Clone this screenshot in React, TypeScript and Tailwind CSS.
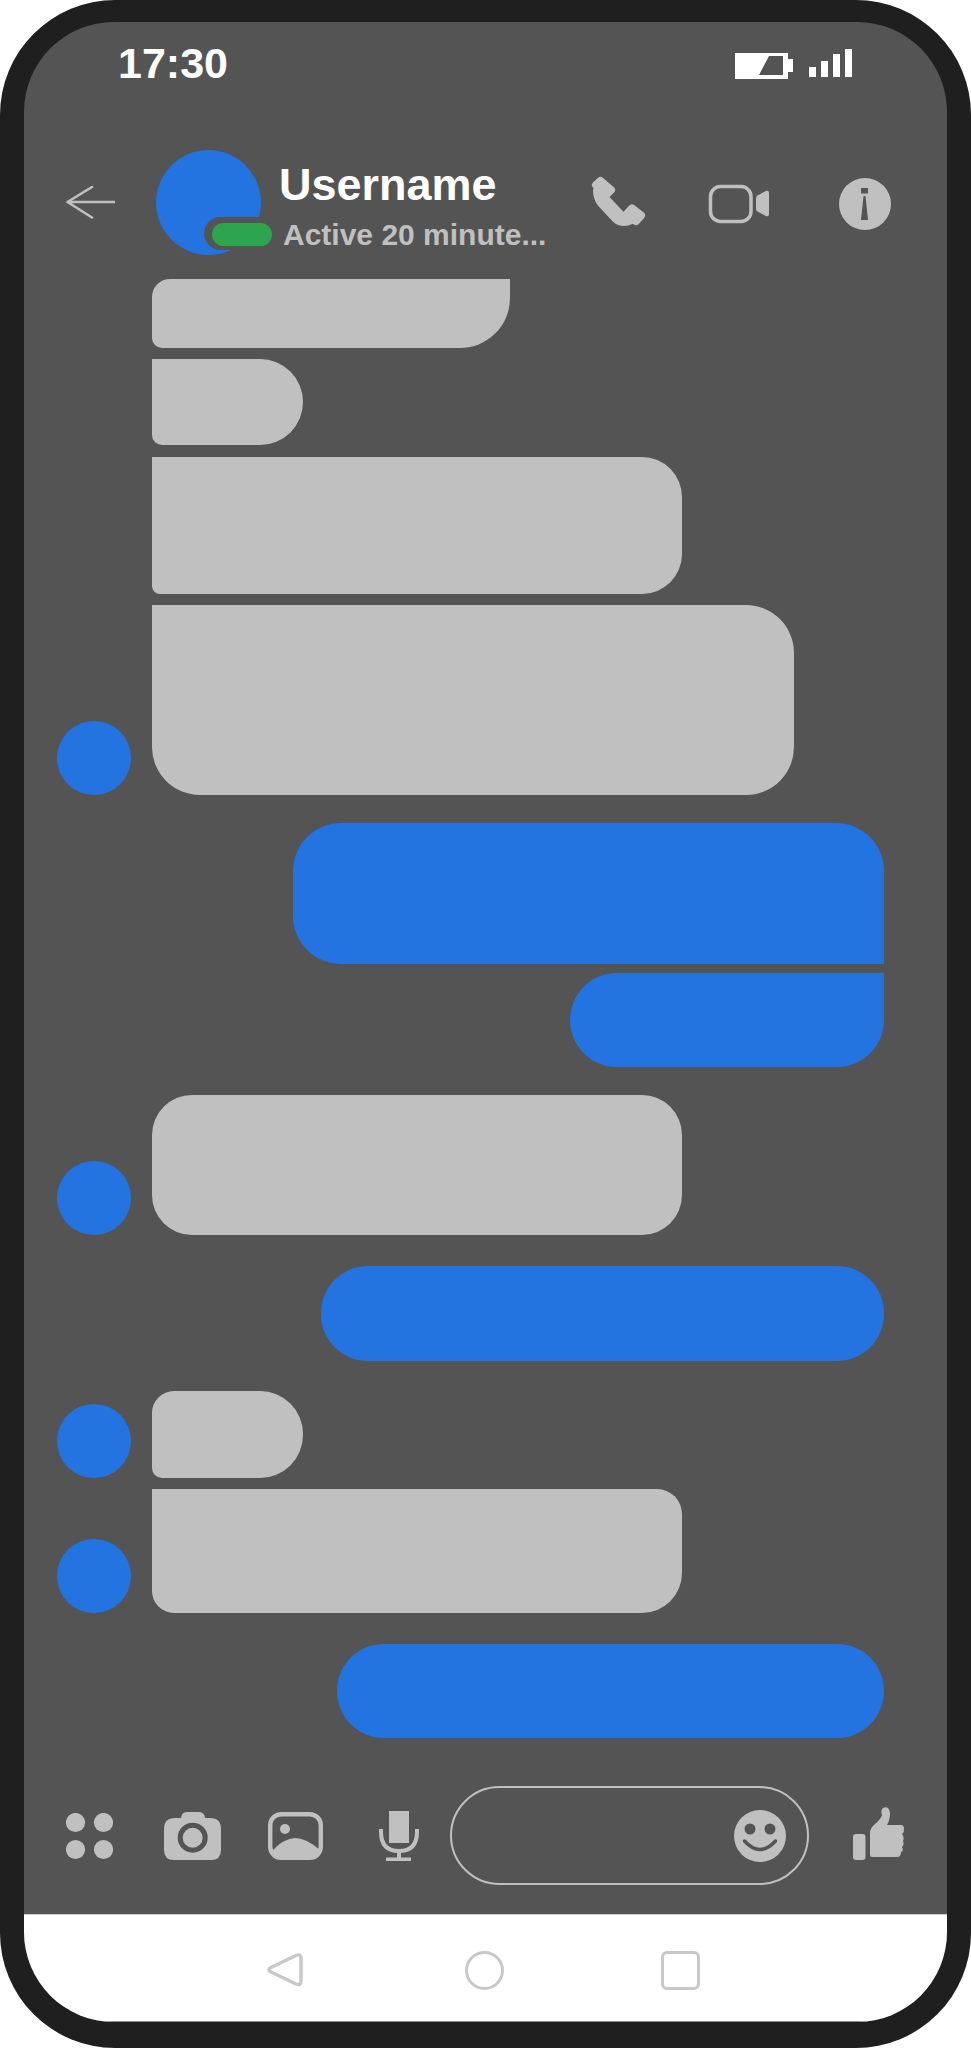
import React from 'react'

function Avatar() {
  return <div className="h-[74px] w-[74px] shrink-0 rounded-full bg-[#2374e1]" />
}

function Incoming({ className, avatar }: { className: string; avatar?: boolean }) {
  return (
    <div className="flex items-end gap-[20.5px] pl-[33px]">
      {avatar ? <Avatar /> : <div className="w-[74px] shrink-0" />}
      <div className={'bg-[#c0c0c0] ' + className} />
    </div>
  )
}

function Outgoing({ className }: { className: string }) {
  return (
    <div className="flex justify-end pr-[63px]">
      <div className={'bg-[#2374e1] ' + className} />
    </div>
  )
}

function StatusIcons() {
  return (
    <svg width="117" height="30" viewBox="735 48 117 30" fill="#fff">
      <path fillRule="evenodd" d="M735 52H788V58H793V71H788V78H735ZM769 55H783V74H759Z" />
      <rect x="809" y="66" width="7" height="10" />
      <rect x="821" y="60" width="7" height="16" />
      <rect x="833" y="53" width="7" height="23" />
      <rect x="845" y="48" width="7" height="28" />
    </svg>
  )
}

function BackArrow() {
  return (
    <svg width="49" height="34" viewBox="66 185 49 34" fill="none" stroke="#c0c0c0" strokeWidth="2.6" strokeLinecap="round" strokeLinejoin="round">
      <path d="M92 187L67.5 202L92 217.5M68 202H114.5" />
    </svg>
  )
}

function PhoneIcon() {
  return (
    <svg width="60" height="56" viewBox="590 174 60 56" fill="#c0c0c0" stroke="#c0c0c0" strokeLinejoin="round">
      <path d="M596 185L600.500 181L611 190L606 195Z" strokeWidth="8" />
      <path d="M627 214L632 208.500L641 215.500L636 221Z" strokeWidth="8" />
      <path d="M595 190Q595 199 600 205L614 220Q622 227 632 222L622 213L605 195Z" strokeWidth="4" />
    </svg>
  )
}

function VideoIcon() {
  return (
    <svg width="64" height="42" viewBox="707 183 64 42" fill="#c0c0c0">
      <rect x="710.5" y="186.5" width="40.5" height="35" rx="10" fill="none" stroke="#c0c0c0" strokeWidth="3.5" />
      <path d="M756 198Q756 196.500 757.500 195.500L766 191Q769 190 769 193V214Q769 217 766 216L757.500 211.500Q756 210.500 756 209Z" />
    </svg>
  )
}

function InfoIcon() {
  return (
    <svg width="52" height="52" viewBox="839 178 52 52">
      <circle cx="865" cy="204" r="26" fill="#c0c0c0" />
      <rect x="861" y="188" width="7" height="5.500" fill="#545454" />
      <path d="M863.500 196H865.500L868 220H861Z" fill="#545454" />
    </svg>
  )
}

function DotsIcon() {
  return (
    <svg width="47" height="47" viewBox="66 1813 47 47" fill="#c0c0c0">
      <circle cx="75.500" cy="1822.500" r="9.600" />
      <circle cx="103.500" cy="1822.500" r="9.600" />
      <circle cx="75.500" cy="1849.500" r="9.600" />
      <circle cx="103.500" cy="1849.500" r="9.600" />
    </svg>
  )
}

function CameraIcon() {
  return (
    <svg width="57" height="48" viewBox="164 1812 57 48">
      <path d="M164 1829Q164 1818 175 1818H181Q181.500 1812 187 1812H199Q204.500 1812 205 1818H210Q221 1818 221 1829V1850Q221 1860 211 1860H174Q164 1860 164 1850Z" fill="#c0c0c0" />
      <circle cx="192.700" cy="1837.700" r="12.500" fill="#c0c0c0" stroke="#545454" strokeWidth="5" />
    </svg>
  )
}

function ImageIcon() {
  return (
    <svg width="55" height="48" viewBox="268 1811 55 48">
      <rect x="270.200" y="1813.200" width="50.600" height="43.600" rx="11" fill="none" stroke="#c0c0c0" strokeWidth="4.400" />
      <circle cx="285" cy="1828" r="5" fill="#c0c0c0" />
      <path d="M271 1851Q284 1837 295 1837Q306 1837 320 1849V1851Q320 1858 310 1858H282Q272 1858 271 1851Z" fill="#c0c0c0" />
    </svg>
  )
}

function MicIcon() {
  return (
    <svg width="40" height="50" viewBox="379 1810 40 50" fill="#c0c0c0">
      <rect x="389" y="1810" width="20" height="32" />
      <path d="M381 1828V1831Q381 1850 399 1850Q417 1850 417 1831V1828" fill="none" stroke="#c0c0c0" strokeWidth="4" />
      <rect x="397" y="1850" width="4" height="8" />
      <rect x="386" y="1856.500" width="25" height="3.500" />
    </svg>
  )
}

function SmileIcon() {
  return (
    <svg width="52" height="52" viewBox="734 1809 52 52">
      <circle cx="760" cy="1835" r="26" fill="#c0c0c0" />
      <circle cx="750" cy="1828" r="5.500" fill="#545454" />
      <circle cx="770" cy="1828" r="5.500" fill="#545454" />
      <path d="M744.500 1840Q760 1857 775.500 1840" fill="none" stroke="#545454" strokeWidth="3.500" strokeLinecap="round" />
    </svg>
  )
}

function ThumbIcon() {
  return (
    <svg width="51" height="53" viewBox="853 1807 51 53" fill="#c0c0c0" className="mt-[-4px]">
      <rect x="853" y="1834" width="12.500" height="26" rx="3" />
      <path d="M870 1855V1832Q871 1827 875 1824Q881 1819 882 1815Q880 1809 884 1807.500Q889 1806 890 1813Q890 1820 887 1825H901Q904 1825 904 1829Q904 1833 902 1834Q904.500 1837 903 1841Q904.500 1845 902 1847Q904 1851 901 1852Q901 1857 897 1857H872Q870 1857 870 1855Z" />
    </svg>
  )
}

function App() {
  return (
    <div className="h-[2048px] w-[971px] rounded-[115px] bg-[#1f1f1f] px-[24px] pb-[26px] pt-[22px] font-['Liberation_Sans',sans-serif]">
      <div className="flex h-full flex-col overflow-hidden rounded-[90px] bg-[#545454]">
        <div className="flex h-[83px] shrink-0 items-center justify-between pl-[94px] pr-[95px]">
          <span className="text-[43px] font-bold leading-none text-white">17:30</span>
          <StatusIcons />
        </div>

        <div className="flex h-[174px] shrink-0 items-start pl-[42px] pt-[44.5px]">
          <div className="flex h-[105px] items-center">
            <BackArrow />
          </div>
          <div className="relative ml-[41px] h-[105px] w-[105px] shrink-0 rounded-full bg-[#2374e1]">
            <div className="absolute left-[48px] top-[67px] h-[33px] w-[68px] rounded-l-full rounded-r-[20px] bg-[#545454]" />
            <div className="absolute left-[56px] top-[73px] h-[23px] w-[60px] rounded-full bg-[#2da44e]" />
          </div>
          <div className="ml-[18px] w-[311px] shrink-0 pt-[12px]">
            <p className="text-[45px] font-bold leading-[46px] text-white">Username</p>
            <p className="ml-[4px] mt-[4px] text-[30px] font-bold leading-[46px] text-[#c0c0c0]">Active 20 minute...</p>
          </div>
          <div className="flex h-[105px] items-center">
            <PhoneIcon />
            <div className="ml-[57px] mt-[4px]">
              <VideoIcon />
            </div>
            <div className="ml-[68px] mt-[4px]">
              <InfoIcon />
            </div>
          </div>
        </div>

        <div className="flex shrink-0 flex-col">
          <Incoming className="h-[69px] w-[358px] rounded-[18px_0_50px_10px]" />
          <div className="mt-[11px]">
            <Incoming className="h-[86px] w-[151px] rounded-[0_43px_43px_10px]" />
          </div>
          <div className="mt-[12px]">
            <Incoming className="h-[137px] w-[530px] rounded-[0_40px_40px_8px]" />
          </div>
          <div className="mt-[11px]">
            <Incoming avatar className="h-[190px] w-[642px] rounded-[0_48px_48px_48px]" />
          </div>
          <div className="mt-[28px]">
            <Outgoing className="h-[141px] w-[591px] rounded-[48px_48px_0_48px]" />
          </div>
          <div className="mt-[9px]">
            <Outgoing className="h-[94px] w-[314px] rounded-[47px_0_47px_47px]" />
          </div>
          <div className="mt-[28px]">
            <Incoming avatar className="h-[140px] w-[530px] rounded-[40px]" />
          </div>
          <div className="mt-[31px]">
            <Outgoing className="h-[95px] w-[563px] rounded-[47px]" />
          </div>
          <div className="mt-[30px]">
            <Incoming avatar className="h-[87px] w-[151px] rounded-[22px_43px_43px_10px]" />
          </div>
          <div className="mt-[11px]">
            <Incoming avatar className="h-[124px] w-[530px] rounded-[0_25px_40px_22px]" />
          </div>
          <div className="mt-[31px]">
            <Outgoing className="h-[94px] w-[547px] rounded-[47px]" />
          </div>
        </div>

        <div className="flex h-[176px] shrink-0 items-start pl-[42px] pt-[48px]">
          <div className="flex h-[99px] items-center">
            <div className="mt-[2px]">
              <DotsIcon />
            </div>
            <div className="ml-[51px] mt-[1px]">
              <CameraIcon />
            </div>
            <div className="ml-[47px]">
              <ImageIcon />
            </div>
            <div className="ml-[56px]">
              <MicIcon />
            </div>
            <div className="ml-[31px] flex h-[99px] w-[359px] items-center justify-end rounded-full border-2 border-[#c0c0c0] pr-[21px]">
              <SmileIcon />
            </div>
            <div className="ml-[44px]">
              <ThumbIcon />
            </div>
          </div>
        </div>

        <div className="flex flex-1 items-center border-b border-t border-b-[#8a8a8a] border-t-[#cfcfcf] bg-white pl-[243px] pt-[4px]">
          <svg width="36" height="36" viewBox="267 1953 36 36" fill="none" stroke="#c8c8c8" strokeWidth="3.500" strokeLinejoin="round">
            <path d="M271 1968.500L296 1956.500Q301 1954.500 301 1959V1982Q301 1987 296 1985L271 1973Q267 1971 271 1968.500Z" />
          </svg>
          <div className="ml-[162px] h-[39px] w-[39px] rounded-full border-[3.5px] border-[#c8c8c8]" />
          <div className="ml-[157px] h-[39px] w-[39px] rounded-[6px] border-[3.5px] border-[#c8c8c8]" />
        </div>
      </div>
    </div>
  )
}

export default App
